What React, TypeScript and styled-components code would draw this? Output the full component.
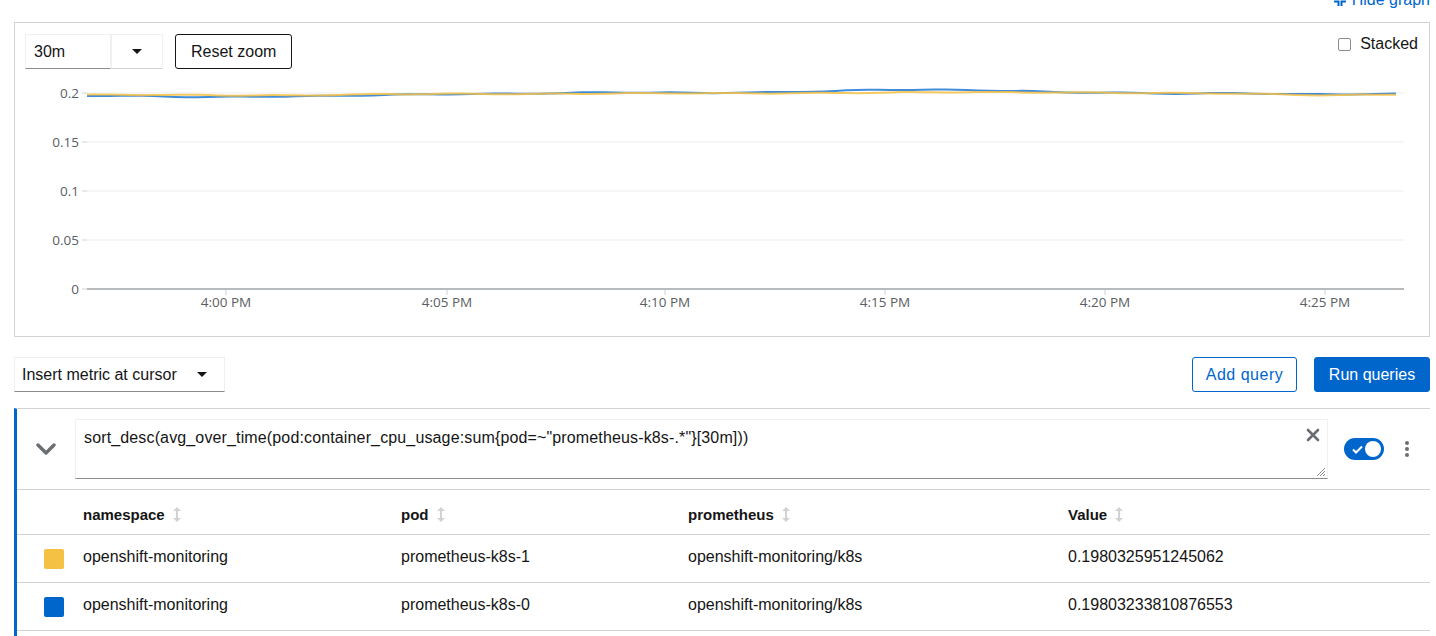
import React from "react";
import styled, { createGlobalStyle } from "styled-components";

const Global = createGlobalStyle`
  html, body { margin: 0; padding: 0; background: #fff; }
  body { font-family: "Liberation Sans", Arial, sans-serif; color: #151515; overflow: hidden; }
  * { box-sizing: border-box; }
`;

const Page = styled.div`
  width: 1436px;
  height: 636px;
  padding: 0 6px 0 14px;
  overflow: hidden;
`;

const LinkRow = styled.div`
  height: 22px;
  display: flex;
  justify-content: flex-end;
  align-items: flex-start;
`;

const HideLink = styled.a`
  margin-top: -8px;
  display: inline-flex;
  align-items: center;
  gap: 6px;
  color: #06c;
  font-size: 16px;
  line-height: 16px;
  text-decoration: none;
`;

const GraphBox = styled.div`
  border: 1px solid #d2d2d2;
  height: 315px;
`;

const Toolbar = styled.div`
  display: flex;
  align-items: flex-start;
  padding: 11px 11px 0 10px;
  height: 45px;
`;

const SpanSelect = styled.div`
  display: flex;
  height: 35px;
`;

const SpanInput = styled.div`
  width: 86px;
  height: 35px;
  border: 1px solid #f0f0f0;
  border-bottom-color: #8a8d90;
  padding: 0 8px;
  display: flex;
  align-items: center;
  font-size: 16px;
`;

const SpanToggle = styled.div`
  width: 52px;
  height: 35px;
  border: 1px solid #f0f0f0;
  border-bottom-color: #d2d2d2;
  display: flex;
  align-items: center;
  justify-content: center;
`;

const Caret = styled.span`
  width: 0;
  height: 0;
  border-left: 5px solid transparent;
  border-right: 5px solid transparent;
  border-top: 5px solid #151515;
`;

const ResetButton = styled.button`
  margin-left: 12px;
  height: 35px;
  padding: 0 15px;
  border: 1px solid #151515;
  border-radius: 3px;
  background: #fff;
  font-family: inherit;
  font-size: 16px;
  color: #151515;
`;

const Spacer = styled.div`
  flex: 1;
`;

const CheckLabel = styled.label`
  display: flex;
  align-items: center;
  gap: 9px;
  font-size: 16px;
  margin-top: 1px;
  height: 18px;
`;

const CheckBox = styled.span`
  width: 13px;
  height: 13px;
  border: 1px solid #8a8d90;
  border-radius: 2px;
  background: #fff;
`;

const ChartSvg = styled.svg`
  display: block;
  width: 1414px;
  height: 268px;
`;

const Controls = styled.div`
  margin-top: 20px;
  display: flex;
  align-items: center;
  height: 35px;
`;

const MetricDropdown = styled.div`
  width: 211px;
  height: 35px;
  border: 1px solid #f0f0f0;
  border-bottom-color: #8a8d90;
  padding: 0 17px 0 7px;
  display: flex;
  align-items: center;
  justify-content: space-between;
  font-size: 16px;
`;

const OutlineButton = styled.button`
  height: 35px;
  width: 105px;
  padding: 0;
  border: 1px solid #06c;
  border-radius: 3px;
  background: #fff;
  color: #06c;
  font-family: inherit;
  font-size: 16px;
  letter-spacing: 0.5px;
`;

const PrimaryButton = styled.button`
  margin-left: 17px;
  height: 35px;
  width: 116px;
  padding: 0;
  border: 1px solid #06c;
  border-radius: 3px;
  background: #06c;
  color: #fff;
  font-family: inherit;
  font-size: 16px;
`;

const QueryPanel = styled.div`
  margin-top: 16px;
  border-top: 1px solid #d2d2d2;
  border-left: 3px solid #06c;
  height: 240px;
`;

const QueryRow = styled.div`
  display: flex;
  align-items: center;
  height: 81px;
  padding: 10px 0 10px 0;
  border-bottom: 1px solid #d2d2d2;
`;

const ChevronCell = styled.div`
  width: 58px;
  display: flex;
  justify-content: center;
`;

const QueryBox = styled.div`
  position: relative;
  width: 1253px;
  height: 60px;
  border: 1px solid #f0f0f0;
  border-bottom-color: #8a8d90;
  padding: 9px 8px;
  font-size: 16px;
  line-height: 18px;
  letter-spacing: 0.14px;
`;

const ClearIcon = styled.span`
  position: absolute;
  right: 7px;
  top: 8px;
  display: flex;
`;

const Resize = styled.span`
  position: absolute;
  right: 1px;
  bottom: 1px;
  display: flex;
`;

const Switch = styled.div`
  margin-left: 16px;
  width: 40px;
  height: 22px;
  border-radius: 11px;
  background: #06c;
  display: flex;
  align-items: center;
  justify-content: space-between;
  padding: 0 3px 0 8px;
`;

const Knob = styled.span`
  width: 16px;
  height: 16px;
  border-radius: 50%;
  background: #fff;
`;

const Kebab = styled.div`
  margin-left: 21px;
  display: flex;
  flex-direction: column;
  gap: 2px;
`;

const Dot = styled.span`
  width: 4px;
  height: 4px;
  border-radius: 50%;
  background: #6a6e73;
`;

const TableRow = styled.div`
  display: grid;
  grid-template-columns: 66px 318px 287px 380px 1fr;
  align-items: center;
  height: 48px;
  padding-bottom: 4px;
  border-bottom: 1px solid #d2d2d2;
  font-size: 16px;
`;

const HeadRow = styled(TableRow)`
  height: 45px;
  padding-top: 5px;
  padding-bottom: 0;
  font-size: 15px;
  font-weight: 700;
`;

const SwatchCell = styled.div`
  display: flex;
  justify-content: flex-end;
  padding-right: 19px;
  padding-top: 5px;
`;

const Swatch = styled.span<{ $color: string }>`
  width: 20px;
  height: 20px;
  border-radius: 2px;
  background: ${(p) => p.$color};
`;

const HeadCell = styled.div`
  display: flex;
  align-items: center;
  gap: 8px;
`;

const Cell = styled.div``;

const SortIcon = () => (
  <svg width="8" height="15" viewBox="0 0 8 15">
    <path d="M4 0 L8 4 H5 V11 H8 L4 15 L0 11 H3 V4 H0 Z" fill="#d2d2d2" />
  </svg>
);

// chart geometry (svg coordinates: page x - 15, page y - 68)
const X0 = 72;
const X1 = 1389;
const toY = (v: number) => 221 - v * 980;

const blueKeys: [number, number][] = [
  [87, 96], [160, 96.2], [200, 97], [260, 96.4], [330, 96.2], [380, 95.3], [450, 94], [520, 93.5], [600, 92.5],
  [700, 93], [760, 92.2], [830, 91], [870, 90], [950, 90], [1020, 90.8], [1060, 92], [1130, 93], [1180, 94],
  [1240, 93.2], [1300, 94], [1404, 94],
];
const yellowKeys: [number, number][] = [
  [87, 95], [200, 95], [300, 95.3], [380, 94.5], [450, 94], [560, 93.6], [700, 93.4], [850, 92.8], [950, 92.4],
  [1060, 92.2], [1150, 93], [1250, 94], [1320, 95], [1404, 94.3],
];

const interp = (keys: [number, number][], x: number) => {
  for (let i = 0; i < keys.length - 1; i++) {
    const [xa, ya] = keys[i];
    const [xb, yb] = keys[i + 1];
    if (x >= xa && x <= xb) return ya + ((yb - ya) * (x - xa)) / (xb - xa);
  }
  return keys[keys.length - 1][1];
};

const buildPath = (keys: [number, number][], seed: number) => {
  const pts: string[] = [];
  for (let x = 87; x <= 1404; x += 11) {
    const jitter = Math.sin(x * 0.07 + seed) * 0.35 + Math.sin(x * 0.023 + seed * 2) * 0.25;
    const y = interp(keys, x) + jitter;
    pts.push(`${(x - 15).toFixed(1)},${(y - 68).toFixed(2)}`);
  }
  return "M" + pts.join(" L");
};

const yTicks = [
  { v: 0.2, l: "0.2" },
  { v: 0.15, l: "0.15" },
  { v: 0.1, l: "0.1" },
  { v: 0.05, l: "0.05" },
  { v: 0, l: "0" },
];
const xTicks = [
  { x: 226, l: "4:00 PM" },
  { x: 447, l: "4:05 PM" },
  { x: 665, l: "4:10 PM" },
  { x: 885, l: "4:15 PM" },
  { x: 1105, l: "4:20 PM" },
  { x: 1325, l: "4:25 PM" },
];

const Chart = () => (
  <ChartSvg viewBox="0 0 1414 268">
    {yTicks.slice(0, 4).map((t) => (
      <line key={t.l} x1={X0} x2={X1} y1={toY(t.v)} y2={toY(t.v)} stroke="#ededed" strokeWidth="1" />
    ))}
    {yTicks.map((t) => (
      <g key={"l" + t.l}>
        <line x1={X0 - 5} x2={X0} y1={toY(t.v)} y2={toY(t.v)} stroke="#d2d2d2" />
        <text
          x={X0 - 8}
          y={toY(t.v)}
          textAnchor="end"
          dominantBaseline="central"
          fontFamily="'Open Sans', sans-serif"
          fontSize="13.5"
          fill="#5a5e63"
        >
          {t.l}
        </text>
      </g>
    ))}
    <line x1={X0} x2={X1} y1={221} y2={221} stroke="#b8bbbe" strokeWidth="2" />
    {xTicks.map((t) => (
      <g key={t.l}>
        <line x1={t.x - 15} x2={t.x - 15} y1={222} y2={227} stroke="#d2d2d2" />
        <text
          x={t.x - 15}
          y={234}
          textAnchor="middle"
          dominantBaseline="central"
          fontFamily="'Open Sans', sans-serif"
          fontSize="13.5"
          fill="#5a5e63"
        >
          {t.l}
        </text>
      </g>
    ))}
    <path d={buildPath(blueKeys, 1.3)} fill="none" stroke="#06c" strokeOpacity="0.75" strokeWidth="2" />
    <path d={buildPath(yellowKeys, 4.1)} fill="none" stroke="#f4c145" strokeOpacity="0.85" strokeWidth="2" />
  </ChartSvg>
);

const rows = [
  { color: "#f4c145", ns: "openshift-monitoring", pod: "prometheus-k8s-1", prom: "openshift-monitoring/k8s", val: "0.1980325951245062" },
  { color: "#06c", ns: "openshift-monitoring", pod: "prometheus-k8s-0", prom: "openshift-monitoring/k8s", val: "0.19803233810876553" },
];

export default function App() {
  return (
    <Page>
      <Global />
      <LinkRow>
        <HideLink href="#">
          <svg width="12" height="12" viewBox="0 0 12 12">
            <path d="M4.5 0 V4.5 H0 M7.5 0 V4.5 H12 M4.5 12 V7.5 H0 M7.5 12 V7.5 H12" stroke="#06c" strokeWidth="2" fill="none" />
          </svg>
          Hide graph
        </HideLink>
      </LinkRow>
      <GraphBox>
        <Toolbar>
          <SpanSelect>
            <SpanInput>30m</SpanInput>
            <SpanToggle>
              <Caret />
            </SpanToggle>
          </SpanSelect>
          <ResetButton>Reset zoom</ResetButton>
          <Spacer />
          <CheckLabel>
            <CheckBox />
            Stacked
          </CheckLabel>
        </Toolbar>
        <Chart />
      </GraphBox>
      <Controls>
        <MetricDropdown>
          Insert metric at cursor
          <Caret />
        </MetricDropdown>
        <Spacer />
        <OutlineButton>Add query</OutlineButton>
        <PrimaryButton>Run queries</PrimaryButton>
      </Controls>
      <QueryPanel>
        <QueryRow>
          <ChevronCell>
            <svg width="20" height="14" viewBox="0 0 20 14">
              <path d="M2 3 L10 11 L18 3" stroke="#6a6e73" strokeWidth="3.4" fill="none" strokeLinecap="round" strokeLinejoin="round" />
            </svg>
          </ChevronCell>
          <QueryBox>
            {'sort_desc(avg_over_time(pod:container_cpu_usage:sum{pod=~"prometheus-k8s-.*"}[30m]))'}
            <ClearIcon>
              <svg width="14" height="14" viewBox="0 0 14 14">
                <path d="M2 2 L12 12 M12 2 L2 12" stroke="#6a6e73" strokeWidth="2.6" strokeLinecap="round" />
              </svg>
            </ClearIcon>
            <Resize>
              <svg width="10" height="10" viewBox="0 0 10 10">
                <path d="M9 1 L1 9 M9 4 L4 9 M9 7 L7 9" stroke="#8a8d90" strokeWidth="1" />
              </svg>
            </Resize>
          </QueryBox>
          <Switch>
            <svg width="11" height="9" viewBox="0 0 11 9">
              <path d="M1 4.5 L4 7.5 L10 1.5" stroke="#fff" strokeWidth="2" fill="none" />
            </svg>
            <Knob />
          </Switch>
          <Kebab>
            <Dot />
            <Dot />
            <Dot />
          </Kebab>
        </QueryRow>
        <HeadRow>
          <Cell />
          <HeadCell>namespace <SortIcon /></HeadCell>
          <HeadCell>pod <SortIcon /></HeadCell>
          <HeadCell>prometheus <SortIcon /></HeadCell>
          <HeadCell>Value <SortIcon /></HeadCell>
        </HeadRow>
        {rows.map((r) => (
          <TableRow key={r.pod}>
            <SwatchCell>
              <Swatch $color={r.color} />
            </SwatchCell>
            <Cell>{r.ns}</Cell>
            <Cell>{r.pod}</Cell>
            <Cell>{r.prom}</Cell>
            <Cell>{r.val}</Cell>
          </TableRow>
        ))}
      </QueryPanel>
    </Page>
  );
}
